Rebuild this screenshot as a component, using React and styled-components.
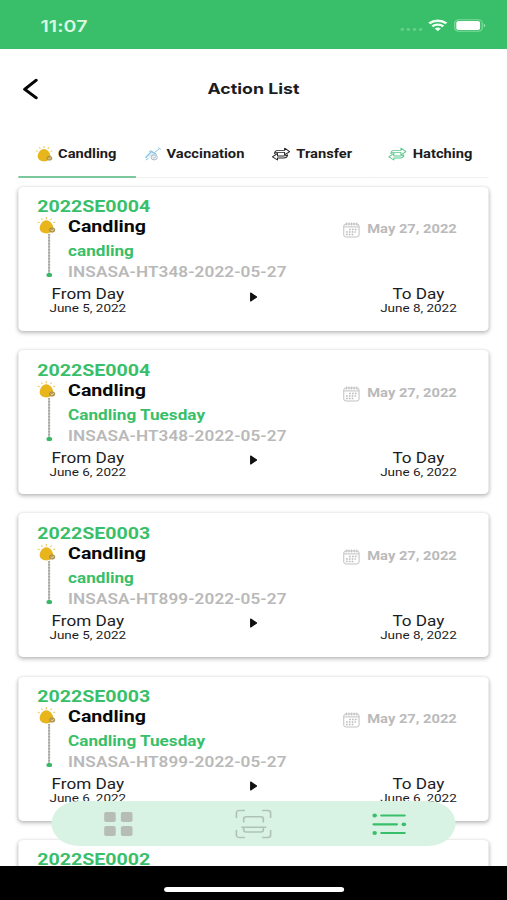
import React from "react";
import styled, { createGlobalStyle } from "styled-components";

const GREEN = "#39bf69";

const GlobalStyle = createGlobalStyle`
  * { box-sizing: border-box; }
  html, body { margin: 0; padding: 0; background: #fff; overflow: hidden; }
`;

const Viewport = styled.div`
  width: 507px;
  height: 900px;
  overflow: hidden;
`;

/* 414pt wide device, widened to fill the viewport */
const Device = styled.div`
  position: relative;
  display: flex;
  flex-direction: column;
  width: 414px;
  height: 900px;
  transform: scaleX(1.22464);
  transform-origin: 0 0;
  background: #fff;
  color: #1c1c1e;
  font-family: Roboto, "Liberation Sans", sans-serif;
`;

const StatusBar = styled.div`
  display: flex;
  flex: none;
  height: 49px;
  padding: 0 17px 0 33px;
  justify-content: space-between;
  background: ${GREEN};
`;

const Clock = styled.span`
  padding-top: 15px;
  color: #d9f8e2;
  font: 600 16px/22px Inter, sans-serif;
  letter-spacing: 0.1px;
`;

const StatusIcons = styled.svg`
  width: 72px;
  height: 14px;
  margin-top: 19px;
`;

const Header = styled.header`
  display: grid;
  flex: none;
  grid-template-columns: 60px 1fr 60px;
  align-items: center;
  height: 80px;
`;

const BackButton = styled.button`
  height: 24px;
  padding: 0 0 0 17.5px;
  border: 0;
  background: none;
  text-align: left;
  svg { display: block; }
`;

const Title = styled.h1`
  margin: 0;
  font: 700 14.5px/20px Inter, sans-serif;
  letter-spacing: 0;
  text-align: center;
`;

const Tabs = styled.nav`
  display: grid;
  flex: none;
  grid-template-columns: 96px 98px 94px 96px;
  height: 49px;
  margin: 0 15px;
`;

const Tab = styled.div`
  display: flex;
  align-items: center;
  gap: ${(p) => p.$gap || 4}px;
  padding: ${(p) => (p.$active ? 2 : 1)}px 0 0 ${(p) => p.$indent}px;
  border-bottom: ${(p) => (p.$active ? "2px solid #7cc79c" : "1px solid #f0f0f0")};
  font-size: 12px;
  font-weight: 700;
  white-space: nowrap;
  svg { flex: none; }
`;

const List = styled.main`
  display: flex;
  flex: 1;
  flex-direction: column;
  gap: 19.2px;
  min-height: 0;
  padding: 9px 15px 0;
  overflow: hidden;
`;

const Card = styled.article`
  flex: none;
  height: 144px;
  padding: 10.4px 26px 0 15.4px;
  border-radius: 4px;
  background: #fff;
  box-shadow: 0 2px 4px rgba(0, 0, 0, 0.25), 0 0 3px rgba(0, 0, 0, 0.1);
`;

const Code = styled.div`
  color: ${GREEN};
  font-size: 16px;
  font-weight: 700;
  line-height: 20px;
`;

const Details = styled.div`
  display: flex;
  height: 69px;
`;

const Marker = styled.svg`
  flex: none;
  width: 25.2px;
  height: 64px;
`;

const Names = styled.div`
  flex: 1;
  white-space: nowrap;
`;

const Kind = styled.div`
  color: #090909;
  font-size: 16px;
  font-weight: 700;
  line-height: 19px;
`;

const Task = styled.div`
  padding-top: 5px;
  color: ${GREEN};
  font-size: 14px;
  font-weight: 700;
  line-height: 20px;
`;

const Batch = styled.div`
  color: #b9b9b9;
  font-size: 14px;
  font-weight: 600;
  letter-spacing: 0.08px;
  line-height: 23px;
`;

const Created = styled.div`
  display: flex;
  gap: 6px;
  align-items: center;
  height: 24px;
  color: #bababa;
  font-size: 12px;
  font-weight: 700;
  line-height: 14px;
  white-space: nowrap;
  svg { margin-top: 2px; }
`;

const Range = styled.div`
  display: flex;
  align-items: center;
  justify-content: space-between;
  padding-left: 10px;
`;

const Day = styled.div`
  text-align: center;
  font-size: 11px;
  line-height: 14px;
`;

const DayLabel = styled.div`
  font-size: 14px;
  line-height: 16px;
`;

const Arrow = styled.svg`
  width: 6px;
  height: 10px;
  margin: -9px 0 0 0.5px;
`;

const BottomNav = styled.nav`
  position: absolute;
  left: 42.4px;
  top: 801px;
  display: flex;
  align-items: center;
  justify-content: space-between;
  width: 330px;
  height: 45px;
  padding: 0 40.5px 0 43px;
  border-radius: 23px;
  background: #d8f3e3;
`;

const HomeArea = styled.footer`
  flex: none;
  height: 34px;
  padding-top: 21px;
  background: #000;
`;

const HomeBar = styled.div`
  width: 147px;
  height: 5px;
  margin: 0 auto;
  border-radius: 3px;
  background: #fff;
`;

function EggShape() {
  return (
    <>
      <path d="M6.6 2.3C9.6 2.3 12.2 6.4 12.2 10C12.2 13.4 9.8 15.4 6.8 15.4C3.5 15.4 1.2 13.3 1.2 10C1.2 6.3 3.8 2.3 6.6 2.3Z" fill="#e8b51d" />
      <path d="M6.6-1v2.2M2.6.4l.9 1.7M11 .4l-1 1.7M-.4 4l1.6.9M13.9 4l-1.6.9" stroke="#ebc75c" strokeWidth=".9" />
      <circle cx="11.4" cy="12" r="2.2" fill="#c2a34b" stroke="#8f8053" strokeWidth=".6" />
      <path d="M10.3 12l1 1 1.4-1.8" fill="none" stroke="#eee0b7" strokeWidth=".6" />
    </>
  );
}

function EggIcon() {
  return <svg width="14" height="16" viewBox="-.5 -1 14.5 17"><EggShape /></svg>;
}

function VaccineIcon() {
  return (
    <svg width="14" height="16" viewBox="0 0 14 16" fill="none">
      <path d="M1 12.2C1.6 9.2 4.2 8.4 5.6 5.4l3.6 2.4" stroke="#8cc6e6" strokeWidth="1.2" />
      <path d="M2.5 11.4C3.4 9.2 5.2 8.4 6.2 6.6l2.4 1.8Z" fill="#d4ebf7" />
      <path d="M1 14l2.3-1.6M5.2 5l5 3.6M8.6 6L12 3M11 1.6l2.6 2M3.6 6l1.5-1.6" stroke="#8cbfdd" strokeWidth=".8" />
      <circle cx="7.9" cy="11.4" r="2.5" fill="#eef3f6" stroke="#9aa8b1" strokeWidth=".7" />
      <path d="M6.8 11.4l.9.9 1.5-1.6" stroke="#9aa8b1" strokeWidth=".6" />
    </svg>
  );
}

function SwapIcon({ color }) {
  return (
    <svg width="15" height="14" viewBox="0 0 15 14" fill="none" stroke={color} strokeWidth=".85" strokeLinejoin="round">
      <path d="M2.2 6.6C2.2 4.4 3.6 3.4 5.4 3.4h5V1.2l4.1 3.4-4.1 3.2V5.4H5.5C4 5.4 2.8 5.7 2.2 6.6Z" />
      <path d="M12.8 7.8C12.8 10 11.4 11 9.6 11h-5v2L.5 9.8l4.1-3.4V9h4.9C11 9 12.2 8.7 12.8 7.8Z" />
    </svg>
  );
}

function CalendarIcon() {
  return (
    <svg width="14" height="16" viewBox="0 0 14 16" fill="none" stroke="#b9b9b9" strokeWidth=".8">
      <rect x=".7" y="2" width="12.5" height="13" rx="2" />
      <path d="M1 4.9h12M2.8.5v3M5 .5v3M7.1.5v3M9.2.5v3M11.4.5v3" />
      <path d="M5.2 7.5h7M2.6 10h8M2.6 12.5h6" strokeWidth="1.4" strokeDasharray="1.3 1" />
    </svg>
  );
}

function ActionCard({ code, task, batch, from, to }) {
  return (
    <Card>
      <Code>{code}</Code>
      <Details>
        <Marker viewBox="0 0 25.2 64">
          <g transform="translate(1.2 1)"><EggShape /></g>
          <path d="M10.1 17v40" stroke="#c4c2bd" strokeWidth="1.6" />
          <path d="M10.1 17v40" stroke="#a5a5a2" strokeWidth="1.6" strokeDasharray="1.5 1.5" />
          <rect x="8" y="56" width="4.5" height="4" rx="1.5" fill="#39b968" />
        </Marker>
        <Names>
          <Kind>Candling</Kind>
          <Task>{task}</Task>
          <Batch>{batch}</Batch>
        </Names>
        <Created><CalendarIcon />May 27, 2022</Created>
      </Details>
      <Range>
        <Day><DayLabel>From Day</DayLabel>{from}</Day>
        <Arrow viewBox="0 0 6 10">
          <path d="M.7 1v8L5.5 5Z" fill="#111" stroke="#111" strokeLinejoin="round" />
        </Arrow>
        <Day><DayLabel>To Day</DayLabel>{to}</Day>
      </Range>
    </Card>
  );
}

const actions = [
  { code: "2022SE0004", task: "candling", batch: "INSASA-HT348-2022-05-27", from: "June 5, 2022", to: "June 8, 2022" },
  { code: "2022SE0004", task: "Candling Tuesday", batch: "INSASA-HT348-2022-05-27", from: "June 6, 2022", to: "June 6, 2022" },
  { code: "2022SE0003", task: "candling", batch: "INSASA-HT899-2022-05-27", from: "June 5, 2022", to: "June 8, 2022" },
  { code: "2022SE0003", task: "Candling Tuesday", batch: "INSASA-HT899-2022-05-27", from: "June 6, 2022", to: "June 6, 2022" },
];

export default function App() {
  return (
    <Viewport>
      <GlobalStyle />
      <Device>
        <StatusBar>
          <Clock>11:07</Clock>
          <StatusIcons viewBox="0 0 72 14" fill="none">
            <g fill="#66d08b">
              <circle cx="3.5" cy="10.5" r="1.4" /><circle cx="8.5" cy="10.5" r="1.4" />
              <circle cx="13.5" cy="10.5" r="1.4" /><circle cx="18.5" cy="10.5" r="1.4" />
            </g>
            <path d="M25.5 4.4a10.6 10.6 0 0 1 14 0M28 7.3a7 7 0 0 1 9 0" stroke="#f2fff5" strokeWidth="2.3" />
            <path d="M30 9.5a4 4 0 0 1 5 0L32.5 12.2Z" fill="#f2fff5" />
            <rect x="46.3" y=".8" width="22.5" height="11.5" rx="3.3" stroke="#7edb9e" />
            <rect x="47.6" y="2" width="19.4" height="9" rx="1.8" fill="#fff" />
            <path d="M70 4.8v3.5c1.8-.5 1.8-3 0-3.5Z" fill="#8be0a8" />
          </StatusIcons>
        </StatusBar>
        <Header>
          <BackButton aria-label="Back">
            <svg width="14" height="24" viewBox="0 0 14 24" fill="none">
              <path d="M11.5 3.2L2.2 12.2l9.3 8.6" stroke="#050505" strokeWidth="2.7" strokeLinecap="round" strokeLinejoin="round" />
            </svg>
          </BackButton>
          <Title>Action List</Title>
        </Header>
        <Tabs>
          <Tab $active $indent={14.4}><EggIcon />Candling</Tab>
          <Tab $indent={7}><VaccineIcon />Vaccination</Tab>
          <Tab $indent={13} $gap={5}><SwapIcon color="#222" />Transfer</Tab>
          <Tab $indent={14} $gap={5}><SwapIcon color="#59c78b" />Hatching</Tab>
        </Tabs>
        <List>
          {actions.map((action, i) => <ActionCard key={i} {...action} />)}
          <Card><Code>2022SE0002</Code></Card>
        </List>
        <BottomNav>
          <svg width="24" height="24" viewBox="0 0 24 24" fill="#b5bdb6">
            <rect x="0" y="0" width="9.5" height="10" rx="1.8" /><rect x="13.7" y="0" width="9.5" height="10" rx="1.8" />
            <rect x="0" y="14" width="9.5" height="10" rx="1.8" /><rect x="13.7" y="14" width="9.5" height="10" rx="1.8" />
          </svg>
          <svg width="30" height="30" viewBox="0 0 30 30" fill="none" stroke="#b0c2b6" strokeWidth="1.4">
            <path d="M1 9V4q0-2.5 2.5-2.5H8M22 1.5h4.5Q29 1.5 29 4v5M29 21v5q0 2.5-2.5 2.5H22M8 28.5H3.5Q1 28.5 1 26v-5" />
            <path d="M7 13.5V9.7q0-2 2-2h12q2 0 2 2v3.8M5 18.3h20.5M7 18.3v2.7q0 2 2 2h12q2 0 2-2v-2.7" />
          </svg>
          <svg width="28" height="24" viewBox="0 0 28 24" fill={GREEN} stroke={GREEN} strokeWidth="2.2" strokeLinecap="round">
            <path d="M7.5 3.5h18.8M1 12.3h19M7.5 21h18.8" />
            <g stroke="none"><circle cx="1.9" cy="3.5" r="1.9" /><circle cx="25.8" cy="12.3" r="1.9" /><circle cx="1.9" cy="21" r="1.9" /></g>
          </svg>
        </BottomNav>
        <HomeArea><HomeBar /></HomeArea>
      </Device>
    </Viewport>
  );
}
